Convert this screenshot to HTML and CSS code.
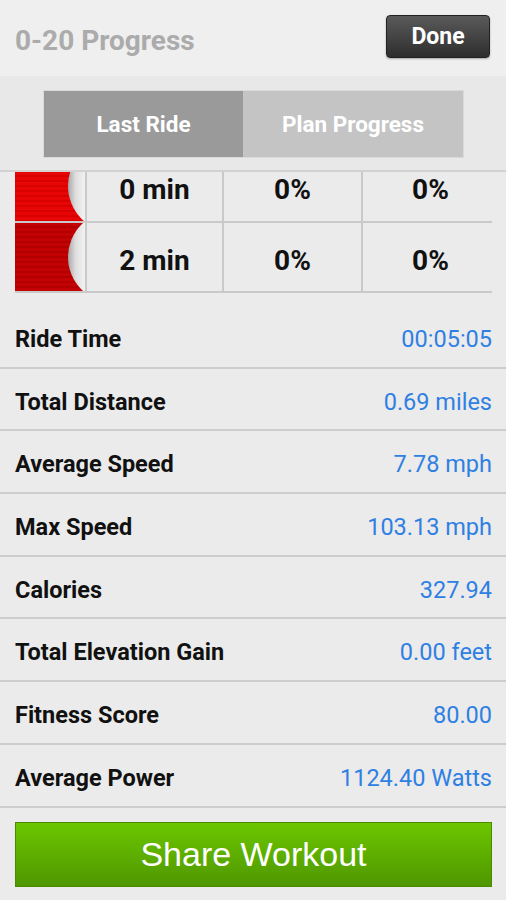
FILE: index.html
```html
<!DOCTYPE html>
<html lang="en">
<head>
    <meta charset="UTF-8">
    <meta name="viewport" content="width=device-width, initial-scale=1.0">
    <title>0-20 Progress</title>
    <link rel="stylesheet" href="styles.css">
</head>
<body>
    <div class="header">
        <h1 class="title">0-20 Progress</h1>
        <a href="#" class="done-btn">Done</a>
    </div>

    <div class="tabs">
        <div class="segment">
            <a href="#" class="seg active">Last Ride</a>
            <a href="#" class="seg">Plan Progress</a>
        </div>
    </div>

    <!-- zone table, first row partly scrolled under the tabs -->
    <div class="zones">
        <div class="zone-color light">
            <svg width="70" height="49" viewBox="0 21 70 49">
                <defs>
                    <linearGradient id="notch" gradientUnits="userSpaceOnUse" x1="53" y1="0" x2="70" y2="0">
                        <stop offset="0" stop-color="#a8a8a8"/>
                        <stop offset="0.45" stop-color="#dedede"/>
                        <stop offset="1" stop-color="#f2f2f2"/>
                    </linearGradient>
                </defs>
                <circle cx="99.5" cy="35" r="46.5" fill="url(#notch)"/>
            </svg>
        </div>
        <div class="cell top">0 min</div>
        <div class="cell top">0%</div>
        <div class="cell top">0%</div>

        <div class="zone-color dark">
            <svg width="70" height="68" viewBox="0 0 70 68">
                <circle cx="99" cy="34" r="46" fill="url(#notch)"/>
            </svg>
        </div>
        <div class="cell">2 min</div>
        <div class="cell">0%</div>
        <div class="cell">0%</div>
    </div>

    <ul class="stats">
        <li class="stat"><span class="label">Ride Time</span><span class="value">00:05:05</span></li>
        <li class="stat"><span class="label">Total Distance</span><span class="value">0.69 miles</span></li>
        <li class="stat"><span class="label">Average Speed</span><span class="value">7.78 mph</span></li>
        <li class="stat"><span class="label">Max Speed</span><span class="value">103.13 mph</span></li>
        <li class="stat"><span class="label">Calories</span><span class="value">327.94</span></li>
        <li class="stat"><span class="label">Total Elevation Gain</span><span class="value">0.00 feet</span></li>
        <li class="stat"><span class="label">Fitness Score</span><span class="value">80.00</span></li>
        <li class="stat"><span class="label">Average Power</span><span class="value">1124.40 Watts</span></li>
    </ul>

    <div class="share">
        <a href="#" class="share-btn">Share Workout</a>
    </div>
</body>
</html>
```

FILE: styles.css
```css
body {
    margin: 0;
    padding: 0;
    width: 506px;
    height: 900px;
    overflow: hidden;
    font-family: Roboto, "Liberation Sans", Arial, sans-serif;
    background-color: #ebebeb;
}
a {
    text-decoration: none;
}

/* top bar */
.header {
    height: 76px;
    box-sizing: border-box;
    display: flex;
    justify-content: space-between;
    align-items: flex-start;
    padding: 15px 16px 0 15px;
    background-color: #efefef;
}
.title {
    margin: 9px 0 0 0;
    font-size: 28px;
    font-weight: bold;
    color: #ababab;
}
.done-btn {
    width: 104px;
    height: 43px;
    box-sizing: border-box;
    display: flex;
    justify-content: center;
    align-items: center;
    background: linear-gradient(#5a5a5a, #2e2e2e);
    border: 1px solid #222;
    border-radius: 4px;
    box-shadow: 0 1px 2px rgba(0,0,0,0.3);
    color: white;
    font-size: 23px;
    font-weight: bold;
}

/* segmented control */
.tabs {
    height: 96px;
    box-sizing: border-box;
    padding: 14px 0 0 43px;
    background-color: #e8e8e8;
    border-bottom: 2px solid #d2d2d2;
}
.segment {
    display: flex;
    width: 421px;
    height: 68px;
    border: 1px solid #dadada;
    box-sizing: border-box;
}
.seg {
    display: flex;
    justify-content: center;
    align-items: center;
    color: white;
    font-size: 22.5px;
    font-weight: bold;
    background-color: #c4c4c4;
    flex: 221;
}
.seg.active {
    background-color: #9a9a9a;
    flex: 200;
}

/* zone table */
.zones {
    margin: 0 14px 0 15px;
    display: grid;
    grid-template-columns: 70px 135px 137px 135px;
    grid-template-rows: 49px 68px;
    background-color: #c9c9c9;
    gap: 2px;
    padding: 0 2px 2px 0;
}
.cell {
    display: flex;
    justify-content: center;
    align-items: center;
    padding-top: 6px;
    background-color: #ebebeb;
    font-size: 28px;
    font-weight: bold;
    color: #111;
}
.cell.top {
    align-items: flex-start;
    padding-top: 0;
    line-height: 35px;
}
.zone-color svg {
    display: block;
}
.zone-color.light {
    background: repeating-linear-gradient(#e80505 0, #e80505 3px, #d90000 3px, #d90000 5px);
}
.zone-color.dark {
    background: repeating-linear-gradient(#c30303 0, #c30303 3px, #b20000 3px, #b20000 5px);
}

/* stats list */
.stats {
    list-style: none;
    margin: 13px 0 0 0;
    padding: 0;
}
.stat {
    height: 62.7px;
    box-sizing: border-box;
    display: flex;
    justify-content: space-between;
    align-items: center;
    padding: 5px 14px 0 15px;
    border-bottom: 2px solid #cdcdcd;
}
.label {
    font-size: 23.5px;
    font-weight: bold;
    color: #111;
}
.value {
    font-size: 23.5px;
    color: #2f80e3;
}

/* share */
.share {
    padding: 14px 14px 0 15px;
}
.share-btn {
    display: flex;
    justify-content: center;
    align-items: center;
    height: 65px;
    background: linear-gradient(#6cc600, #4f9700);
    border: 1px solid #4a8a00;
    box-sizing: border-box;
    color: white;
    font-family: "Liberation Sans", Arial, sans-serif;
    font-size: 34px;
}
```
